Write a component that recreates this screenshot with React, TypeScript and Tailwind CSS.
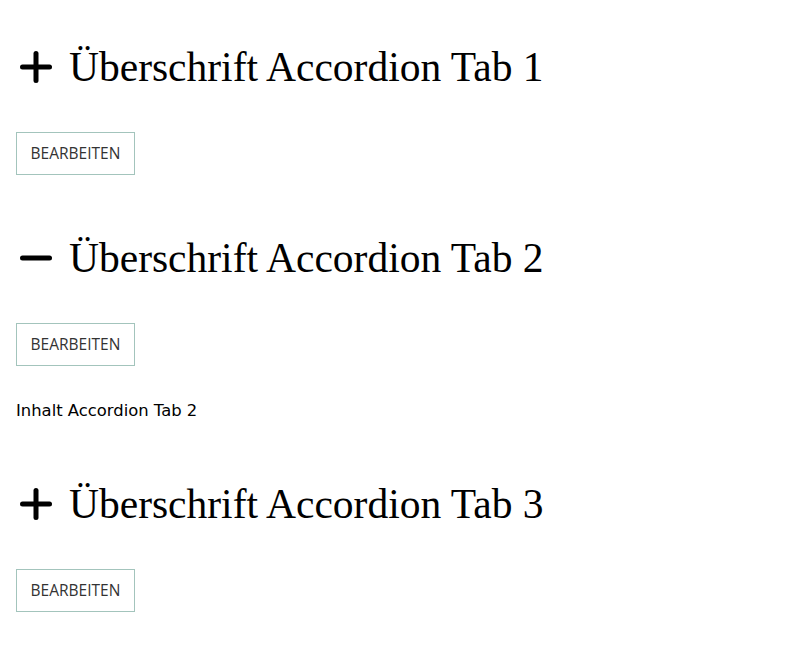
import { useState } from "react";

const tabs = [
  { title: "Überschrift Accordion Tab 1", content: "Inhalt Accordion Tab 1" },
  { title: "Überschrift Accordion Tab 2", content: "Inhalt Accordion Tab 2" },
  { title: "Überschrift Accordion Tab 3", content: "Inhalt Accordion Tab 3" },
];

function PlusMinus({ open }: { open: boolean }) {
  return (
    <svg width="32" height="32" viewBox="0 0 32 32" className="shrink-0">
      <line x1="2.5" y1="16" x2="29.5" y2="16" stroke="#000" strokeWidth="5" strokeLinecap="round" />
      {!open && <line x1="16" y1="2.5" x2="16" y2="29.5" stroke="#000" strokeWidth="5" strokeLinecap="round" />}
    </svg>
  );
}

export default function App() {
  const [open, setOpen] = useState<number | null>(1);

  return (
    <div className="min-h-screen bg-white px-4 pt-[43px] text-black">
      {tabs.map((tab, i) => (
        <div key={i} className={i === 0 ? "" : "mt-[59px]"}>
          <button
            onClick={() => setOpen(open === i ? null : i)}
            className="flex h-12 items-center gap-[17px] pl-1 text-left"
          >
            <PlusMinus open={open === i} />
            <span className="text-[41.5px] leading-[48px] [font-family:'Liberation_Serif',serif]">{tab.title}</span>
          </button>

          <div className="mt-[41px]">
            <span className="inline-flex h-[43px] w-[119px] items-center justify-center border border-[#a3c4bc] text-[15.5px] text-[#333] [font-family:'Open_Sans',sans-serif]">
              BEARBEITEN
            </span>
          </div>

          {open === i && (
            <p className="mt-[35px] text-[16.4px] leading-5 [font-family:'DejaVu_Sans',sans-serif]">{tab.content}</p>
          )}
        </div>
      ))}
    </div>
  );
}
